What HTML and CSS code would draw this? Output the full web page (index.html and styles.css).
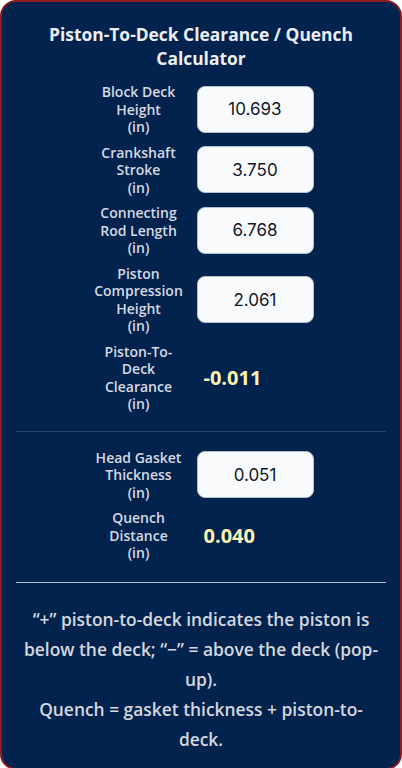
FILE: index.html
```html
<!DOCTYPE html>
<html>
<head>
  <meta charset="utf-8">
  <meta name="viewport" content="width=device-width, initial-scale=1">
  <title>Piston-To-Deck Clearance / Quench Calculator</title>
  <link rel="stylesheet" href="styles.css">
</head>
<body>
  <div class="calc-card">
    <h2 class="calc-title">Piston-To-Deck Clearance / Quench Calculator</h2>

    <!-- Entradas del bloque y del tren alternativo -->
    <div class="calc-grid">
      <label class="calc-label" for="deck">Block Deck<br>Height<br>(in)</label>
      <input class="calc-input" id="deck" type="text" value="10.693">

      <label class="calc-label" for="stroke">Crankshaft<br>Stroke<br>(in)</label>
      <input class="calc-input" id="stroke" type="text" value="3.750">

      <label class="calc-label" for="rod">Connecting<br>Rod Length<br>(in)</label>
      <input class="calc-input" id="rod" type="text" value="6.768">

      <label class="calc-label" for="ch">Piston<br>Compression<br>Height<br>(in)</label>
      <input class="calc-input" id="ch" type="text" value="2.061">

      <span class="calc-label">Piston-To-<br>Deck<br>Clearance<br>(in)</span>
      <span class="calc-result">-0.011</span>
    </div>

    <hr class="calc-divider">

    <!-- Junta y distancia de quench -->
    <div class="calc-grid">
      <label class="calc-label" for="gasket">Head Gasket<br>Thickness<br>(in)</label>
      <input class="calc-input" id="gasket" type="text" value="0.051">

      <span class="calc-label">Quench<br>Distance<br>(in)</span>
      <span class="calc-result">0.040</span>
    </div>

    <hr class="calc-divider calc-divider-strong">

    <div class="calc-notes">
      <p>“+” piston-to-deck indicates the piston is below the deck; “−” = above the deck (pop-up).</p>
      <p>Quench = gasket thickness + piston-to-deck.</p>
    </div>
  </div>
</body>
</html>
```

FILE: styles.css
```css
* {
  margin: 0;
  padding: 0;
  box-sizing: border-box;
}

body {
  background: #ffffff;
  font-family: "Open Sans", "Noto Sans", Arial, sans-serif;
}

/* Tarjeta principal */
.calc-card {
  background: #03234f;
  border: 2px solid #8e1c1f;
  border-radius: 16px;
  padding: 20px 14px 14px;
  color: #e5e7eb;
  min-height: 768px;
}

.calc-title {
  font-size: 17.4px;
  font-weight: 700;
  line-height: 24px;
  text-align: center;
  color: #eceef2;
  padding: 0 30px;
  margin-bottom: 13px;
}

/* Rejilla etiqueta / campo */
.calc-grid {
  display: grid;
  grid-template-columns: 100px 117px;
  justify-content: center;
  column-gap: 8px;
  row-gap: 8px;
  align-items: center;
}

.calc-label {
  font-size: 14px;
  font-weight: 600;
  line-height: 17.5px;
  text-align: center;
  color: #d5d9e0;
}

.calc-input {
  width: 117px;
  height: 47px;
  border: 1px solid #b8c0cc;
  border-radius: 8px;
  background: #f8fafc;
  text-align: center;
  font-family: "Inter", "Roboto", sans-serif;
  font-size: 17px;
  color: #111827;
  outline: none;
}

.calc-result {
  padding-left: 7px;
  font-size: 20px;
  font-weight: 700;
  color: #fdf3b0;
}

.calc-divider {
  border: 0;
  border-top: 1px solid #2a4470;
  margin: 18px 0 17px;
}

.calc-divider-strong {
  border-top: 1px solid #b9c0cc;
  margin: 20px 0 21px;
}

/* Notas al pie */
.calc-notes {
  padding: 0 2px;
  font-size: 17.4px;
  line-height: 30px;
  text-align: center;
  color: #d3d7de;
  font-weight: 600;
}
```
